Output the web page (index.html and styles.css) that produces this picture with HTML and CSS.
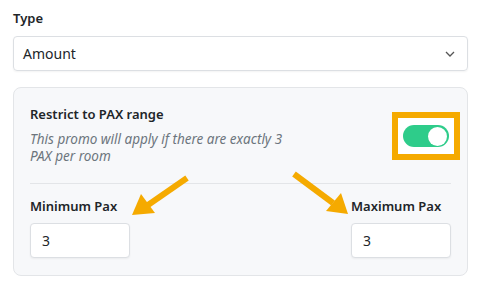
FILE: index.html
```html
<!DOCTYPE html>
<html lang="en">
<head>
    <meta charset="UTF-8">
    <title>Promo - PAX range</title>
    <link rel="stylesheet" href="styles.css">
</head>
<body>
    <div class="form-group">
        <label class="field-label">Type</label>
        <div class="select-box">
            <span>Amount</span>
            <svg class="chevron" width="10" height="6" viewBox="0 0 10 6"><path d="M1 1 L5 5 L9 1" fill="none" stroke="#555" stroke-width="1.3"/></svg>
        </div>
    </div>

    <div class="pax-card">
        <div class="pax-header">
            <div class="pax-text">
                <div class="pax-title">Restrict to PAX range</div>
                <div class="pax-desc">This promo will apply if there are exactly 3 PAX per room</div>
            </div>
            <div class="highlight">
                <div class="toggle"><span class="knob"></span></div>
            </div>
        </div>

        <div class="pax-fields">
            <div class="pax-field">
                <label class="field-label">Minimum Pax</label>
                <div class="num-input">3</div>
            </div>
            <div class="pax-field">
                <label class="field-label">Maximum Pax</label>
                <div class="num-input">3</div>
            </div>
        </div>

        <!-- arrows pointing at the two inputs -->
        <svg class="arrows" width="480" height="285" viewBox="0 0 480 285">
            <g fill="#f5aa00" stroke="#f5aa00">
                <line x1="187" y1="178" x2="148" y2="205" stroke-width="6"/>
                <polygon points="132,215 141,194 155,213" stroke="none"/>
                <line x1="294" y1="174" x2="333" y2="203" stroke-width="6"/>
                <polygon points="348,214 326,211 341,193" stroke="none"/>
            </g>
        </svg>
    </div>
</body>
</html>
```

FILE: styles.css
```css
body {
    font-family: 'Noto Sans', 'Open Sans', sans-serif;
    margin: 0;
    padding: 9px 12px 0 13px;
    color: #212529;
    background-color: #fff;
}
.field-label {
    display: block;
    font-size: 13px;
    font-weight: 600;
    line-height: 18px;
}
.select-box {
    display: flex;
    align-items: center;
    justify-content: space-between;
    height: 33px;
    margin-top: 9px;
    padding: 0 10px 0 9px;
    border: 1px solid #dcdfe3;
    border-radius: 4px;
    font-size: 14px;
    box-shadow: 0 1px 2px rgba(0, 0, 0, 0.05);
}
.chevron {
    margin-right: 2px;
}
.pax-card {
    margin-top: 16px;
    padding: 17px 16px 17px 16px;
    background-color: #f7f8fa;
    border: 1px solid #e3e5e8;
    border-radius: 8px;
}
.pax-header {
    display: flex;
    justify-content: space-between;
    align-items: flex-start;
    padding-bottom: 18px;
    border-bottom: 1px solid #e3e5e8;
}
.pax-title {
    font-size: 13px;
    font-weight: 600;
    line-height: 18px;
}
.pax-desc {
    max-width: 270px;
    margin-top: 8px;
    font-size: 13.5px;
    font-style: italic;
    line-height: 17px;
    color: #6c757d;
}
.highlight {
    margin-top: 7px;
    margin-right: -9px;
    padding: 7px 5px;
    border: 6px solid #f5aa00;
    background-color: #fff;
}
.toggle {
    display: flex;
    justify-content: flex-end;
    align-items: center;
    width: 46px;
    height: 22px;
    padding: 0 2px;
    box-sizing: border-box;
    border-radius: 11px;
    background-color: #2ecc8a;
}
.knob {
    width: 19px;
    height: 19px;
    border-radius: 50%;
    background-color: #fff;
}
.pax-fields {
    display: flex;
    justify-content: space-between;
    padding-top: 13px;
}
.pax-field .field-label {
    margin-bottom: 8px;
}
.num-input {
    width: 100px;
    height: 35px;
    padding-left: 11px;
    box-sizing: border-box;
    border: 1px solid #dcdfe3;
    border-radius: 4px;
    background-color: #fff;
    font-size: 14px;
    line-height: 33px;
    box-shadow: 0 1px 2px rgba(0, 0, 0, 0.05);
}
.arrows {
    position: absolute;
    top: 0;
    left: 0;
    pointer-events: none;
}
```
